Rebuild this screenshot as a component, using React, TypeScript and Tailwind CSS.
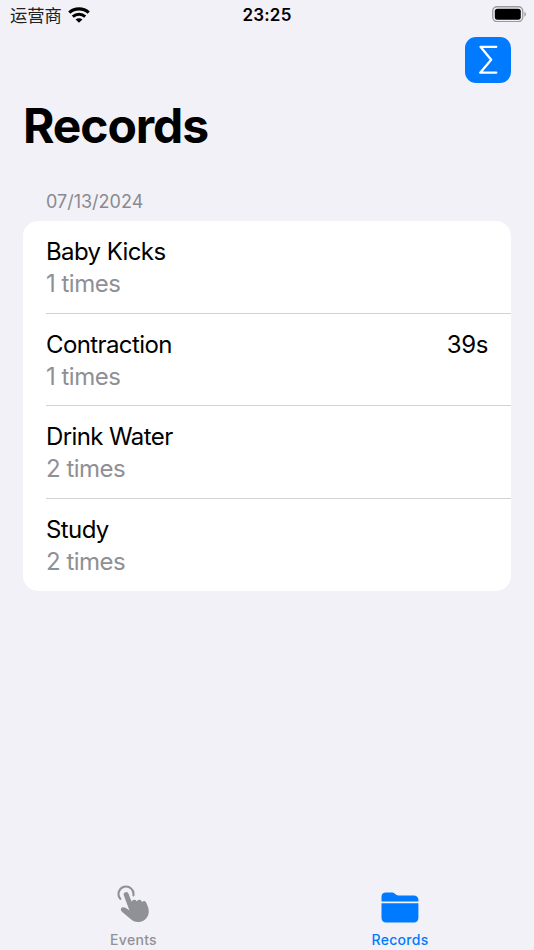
import React from 'react'

interface RecordItem {
  name: string
  count: number
  duration?: string
}

const records: RecordItem[] = [
  { name: 'Baby Kicks', count: 1 },
  { name: 'Contraction', count: 1, duration: '39s' },
  { name: 'Drink Water', count: 2 },
  { name: 'Study', count: 2 },
]

const WifiIcon: React.FC = () => (
  <svg className="w-[22px] h-4" viewBox="0 0 22 16" fill="none" stroke="black">
    <path d="M1.3 5.6C6.8.6 15.2.6 20.7 5.6" strokeWidth="3.3" />
    <path d="M4.8 9.6c3.6-3.2 8.8-3.2 12.4 0" strokeWidth="3" />
    <path d="M11 15.8 7.6 12.5c1.9-1.7 4.9-1.7 6.8 0z" fill="black" stroke="none" />
  </svg>
)

const BatteryIcon: React.FC = () => (
  <svg className="w-[35px] h-4" viewBox="0 0 35 16">
    <rect x="0.75" y="0.75" width="30" height="14.8" rx="4.2" fill="none" stroke="#9a9a9d" strokeWidth="1.3" />
    <rect x="2.8" y="2.7" width="26" height="11" rx="2.6" fill="black" />
    <path d="M32.4 5.7c2 .9 2 4 0 4.9z" fill="#9a9a9d" />
  </svg>
)

const SumIcon: React.FC = () => (
  <svg className="w-[46px] h-[46px]" viewBox="0 0 46 46" fill="none" stroke="white" strokeWidth="2.3" strokeLinecap="round" strokeLinejoin="round">
    <path d="M31.3 9.8H15.5L26.2 22.7 15.2 35.7H31.3" />
  </svg>
)

const TapIcon: React.FC = () => (
  <svg className="w-9 h-[38px]" viewBox="0 0 36 38" fill="#8f9196">
    <path d="M4.3 13.9A7.5 7.5 0 1 1 17.4 10.4" fill="none" stroke="#8f9196" strokeWidth="2.1" strokeLinecap="round" />
    {/* Index finger */}
    <path d="M10.2 9.6 16.4 26" fill="none" stroke="#8f9196" strokeWidth="5" strokeLinecap="round" />
    {/* Thumb, knuckles and palm */}
    <path d="M15 17.4C15.8 14.4 19.4 13.8 20.6 16L20.9 16.5C21.7 14.4 24.4 14.2 25.6 16.2L26.1 17.2C27 15.4 29.4 15.8 30.4 18L31.8 21.4C33.8 26.5 32.8 31.8 28.5 34.9C23.8 38 18 37.4 14.6 34L6.2 27C4.3 25.4 4.6 23.5 5.7 22.7C6.8 21.9 8.2 22.1 9.4 22.8L14.6 26Z" />
  </svg>
)

const FolderIcon: React.FC = () => (
  <svg className="w-[38px] h-[31px]" viewBox="0 0 38 31" fill="#007aff">
    <path d="M.5 9.4V4.7C.5 1.8 2.2.4 5 .4h5.6c1.5 0 2.3.4 3.3 1.3l1 .8c.8.7 1.4.9 2.6.9h15.2c2.9 0 4.7 1.7 4.7 4.4v1.6z" />
    <path d="M.5 11.2h36.9v14.5c0 3-1.7 4.7-4.7 4.7H5.3c-3.1 0-4.8-1.7-4.8-4.7z" />
  </svg>
)

const App: React.FC = () => {
  return (
    <div className="h-screen flex flex-col overflow-hidden bg-[#f2f1f7] text-black font-['Inter','Noto_Sans_CJK_SC',sans-serif]">
      {/* Status bar */}
      <div className="h-[30px] shrink-0 grid grid-cols-3 items-center pl-2.5 pr-[7px]">
        <div className="flex items-center gap-1.5">
          <span className="text-[17.3px] leading-6 pt-px text-[#202022]">运营商</span>
          <WifiIcon />
        </div>
        <div className="text-center text-[17px] leading-6 font-semibold tracking-[0.2px] -ml-[3px]">23:25</div>
        <div className="flex justify-end -mt-0.5">
          <BatteryIcon />
        </div>
      </div>

      {/* Toolbar */}
      <div className="flex justify-end pt-[7px] pr-[23px]">
        <button className="w-[46px] h-[46px] rounded-[11px] bg-[#007aff]" aria-label="Summary">
          <SumIcon />
        </button>
      </div>

      <h1 className="mt-[13px] px-[23px] text-[48px] leading-[60px] font-bold tracking-[-1.1px]">Records</h1>

      <main className="flex-1 px-[23px] pt-[34px]">
        <h2 className="pl-[23px] text-[18px] leading-6 text-[#8a8a8e]">07/13/2024</h2>
        <ul className="mt-[7px] rounded-[15px] bg-white overflow-hidden pl-[23px]">
          {records.map((item) => (
            <li
              key={item.name}
              className="h-[92.5px] pt-[15px] pr-[23px] border-b border-[#d2d2d5] last:border-b-0 flex justify-between text-[24px] leading-8 tracking-[-0.6px]"
            >
              <div>
                <p>{item.name}</p>
                <p className="text-[#8f9096] tracking-[-0.5px]">{item.count} times</p>
              </div>
              {item.duration && <span className="tracking-[-0.4px]">{item.duration}</span>}
            </li>
          ))}
        </ul>
      </main>

      {/* Tab bar */}
      <nav className="h-[67px] shrink-0 grid grid-cols-2 text-[14px] leading-5 font-medium tracking-[0.3px]">
        <div className="flex flex-col items-center text-[#8f9196]">
          <div className="h-[47px] pt-0.5">
            <TapIcon />
          </div>
          <span>Events</span>
        </div>
        <div className="flex flex-col items-center text-[#007aff] pr-px">
          <div className="h-[47px] pt-[9px]">
            <FolderIcon />
          </div>
          <span>Records</span>
        </div>
      </nav>
    </div>
  )
}

export default App
